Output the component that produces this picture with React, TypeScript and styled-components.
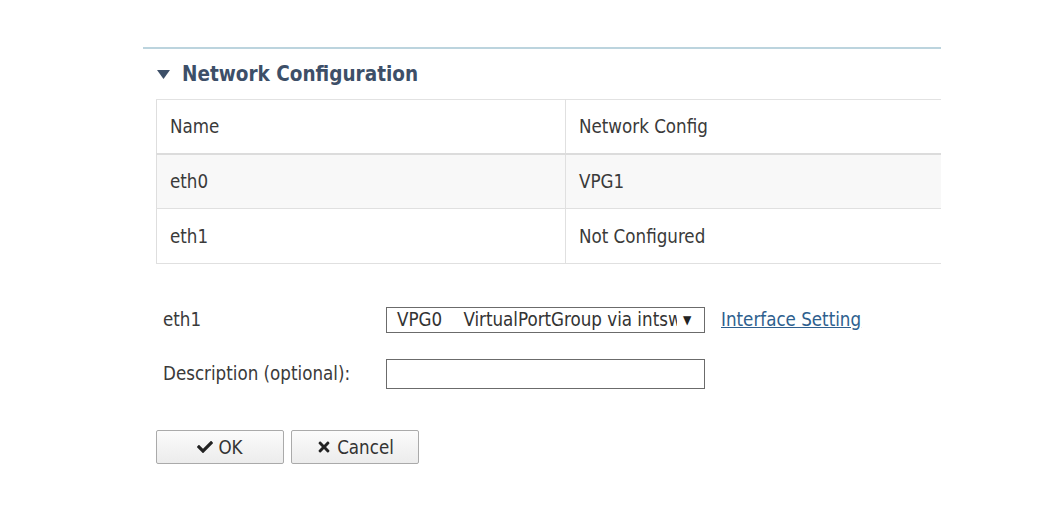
import React from "react";
import styled, { createGlobalStyle } from "styled-components";
import { FaCheck, FaTimes } from "react-icons/fa";

const Global = createGlobalStyle`
  html, body { margin: 0; padding: 0; background: #fff; }
  body { font-family: "DejaVu Sans Condensed", "DejaVu Sans", sans-serif; font-stretch: condensed; color: #333; }
`;

const Page = styled.div`
  width: 798px;
  margin-left: 143px;
  padding-top: 47px;
`;

const Section = styled.section`
  border-top: 2px solid #bcd4de;
`;

const Heading = styled.h2`
  display: flex;
  align-items: center;
  gap: 12px;
  height: 50px;
  margin: 0;
  padding-left: 14px;
  font-size: 20.5px;
  font-weight: bold;
  color: #3d4f68;
`;

const Table = styled.table`
  margin-left: 13px;
  width: 785px;
  border-collapse: collapse;
  border-left: 1px solid #dedede;
  font-size: 18.6px;
  color: #3a3a3a;
`;

const Row = styled.tr<{ $alt?: boolean }>`
  height: 55px;
  background: ${(p) => (p.$alt ? "#f8f8f8" : "#fff")};
  border-bottom: 1px solid #e0e0e0;
`;

const HeadRow = styled.tr`
  height: 54px;
  border-top: 1px solid #e2e2e2;
  border-bottom: 2px solid #dcdcdc;
`;

const Cell = styled.td<{ $first?: boolean }>`
  padding: 0 0 0 13px;
  width: ${(p) => (p.$first ? "395px" : "auto")};
  border-right: ${(p) => (p.$first ? "1px solid #e0e0e0" : "none")};
  font-weight: normal;
  text-align: left;
`;

const Form = styled.div`
  display: grid;
  grid-template-columns: 223px auto;
  row-gap: 26px;
  align-items: center;
  margin-top: 43px;
  padding-left: 20px;
  font-size: 18.6px;
  line-height: 22px;
  color: #3a3a3a;
`;

const Label = styled.label``;

const Controls = styled.div`
  display: flex;
  align-items: center;
  gap: 16px;
`;

const Select = styled.div`
  position: relative;
  box-sizing: border-box;
  width: 319px;
  height: 26px;
  border: 1px solid #6b6b6b;
  padding: 0 24px 0 10px;
  display: flex;
  align-items: center;
  white-space: pre;
  overflow: hidden;
  font-size: 18.6px;
  color: #333;
`;

const Arrow = styled.span`
  position: absolute;
  right: 0;
  top: 0;
  bottom: 0;
  width: 27px;
  box-sizing: border-box;
  padding-left: 6px;
  display: flex;
  align-items: center;
  font-size: 12px;
  color: #222;
  background: #fff;
`;

const Link = styled.a`
  color: #2e5f8e;
  text-decoration: underline;
  font-size: 18.6px;
`;

const Input = styled.input`
  box-sizing: border-box;
  width: 319px;
  height: 30px;
  border: 1px solid #6b6b6b;
  margin: 0;
  padding: 0 6px;
  font: inherit;
`;

const Buttons = styled.div`
  display: flex;
  gap: 7px;
  margin-top: 41px;
  margin-left: 13px;
`;

const Button = styled.button`
  box-sizing: border-box;
  width: 128px;
  height: 34px;
  display: flex;
  align-items: center;
  justify-content: center;
  gap: 5px;
  border: 1px solid #aaa;
  border-radius: 2px;
  background: linear-gradient(#fbfbfb, #ececec);
  font-family: inherit;
  font-stretch: condensed;
  font-size: 18.6px;
  color: #333;
  padding: 0;
  svg { font-size: 16px; color: #222; }
`;

export default function App() {
  return (
    <>
      <Global />
      <Page>
        <Section>
          <Heading>
            <svg width="13" height="9" viewBox="0 0 13 9">
              <polygon points="0,0 13,0 6.5,9" fill="#3d4f68" />
            </svg>
            Network Configuration
          </Heading>
          <Table>
            <thead>
              <HeadRow>
                <Cell as="th" $first>Name</Cell>
                <Cell as="th">Network Config</Cell>
              </HeadRow>
            </thead>
            <tbody>
              <Row $alt>
                <Cell $first>eth0</Cell>
                <Cell>VPG1</Cell>
              </Row>
              <Row>
                <Cell $first>eth1</Cell>
                <Cell>Not Configured</Cell>
              </Row>
            </tbody>
          </Table>
          <Form>
            <Label>eth1</Label>
            <Controls>
              <Select>
                {"VPG0    VirtualPortGroup via intsw"}
                <Arrow>▼</Arrow>
              </Select>
              <Link href="#">Interface Setting</Link>
            </Controls>
            <Label>Description (optional):</Label>
            <Controls>
              <Input type="text" />
            </Controls>
          </Form>
          <Buttons>
            <Button><FaCheck /> OK</Button>
            <Button><FaTimes /> Cancel</Button>
          </Buttons>
        </Section>
      </Page>
    </>
  );
}
